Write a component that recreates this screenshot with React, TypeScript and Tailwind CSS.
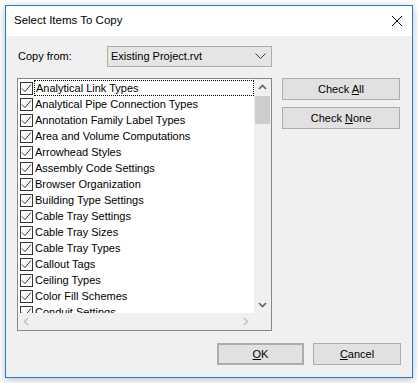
import React from 'react';

const ITEMS = [
  'Analytical Link Types',
  'Analytical Pipe Connection Types',
  'Annotation Family Label Types',
  'Area and Volume Computations',
  'Arrowhead Styles',
  'Assembly Code Settings',
  'Browser Organization',
  'Building Type Settings',
  'Cable Tray Settings',
  'Cable Tray Sizes',
  'Cable Tray Types',
  'Callout Tags',
  'Ceiling Types',
  'Color Fill Schemes',
  'Conduit Settings',
];

const CheckBox: React.FC = () => (
  <span className="w-[13px] h-[13px] border border-[#333333] bg-white shrink-0 flex items-center justify-center">
    <svg width="11" height="11" viewBox="0 0 11 11" fill="none">
      <path d="M1 5.5 L4 8.5 L10 1.5" stroke="#333333" strokeWidth="1" />
    </svg>
  </span>
);

const Chevron: React.FC<{ dir: 'up' | 'down' | 'left' | 'right'; color?: string }> = ({ dir, color = '#606060' }) => {
  const d = {
    up: 'M1 6 L4.5 2.5 L8 6',
    down: 'M1 3 L4.5 6.5 L8 3',
    left: 'M6 1 L2.5 4.5 L6 8',
    right: 'M3 1 L6.5 4.5 L3 8',
  }[dir];
  return (
    <svg width="9" height="9" viewBox="0 0 9 9" fill="none">
      <path d={d} stroke={color} strokeWidth="1.6" />
    </svg>
  );
};

const Btn: React.FC<{ children: React.ReactNode; className?: string }> = ({ children, className = '' }) => (
  <div className={`h-[22px] flex items-center justify-center bg-[#e1e1e1] border border-[#adadad] text-[11px] text-black ${className}`}>
    <span className="whitespace-pre">{children}</span>
  </div>
);

const App: React.FC = () => {
  return (
    <div className="w-[418px] h-[383px] bg-white overflow-hidden [font-family:'Liberation_Sans',Arial,sans-serif]">
      <div className="ml-[5px] mt-[5px] w-[408px] h-[373px] border border-[#1a7fd4] bg-[#f0f0f0] flex flex-col shadow-[0_2px_8px_rgba(0,0,0,0.25)]">
        {/* Title bar */}
        <div className="h-[30px] bg-white flex items-center justify-between pl-[8px] pr-[10px]">
          <span className="text-[11.5px] text-black">Select Items To Copy</span>
          <svg width="10" height="10" viewBox="0 0 10 10">
            <path d="M0 0 L10 10 M10 0 L0 10" stroke="#000" strokeWidth="1" />
          </svg>
        </div>

        {/* Body */}
        <div className="flex flex-col pl-[11px] pr-[11px]">
          <div className="flex items-center mt-[10px] h-[21px]">
            <span className="w-[90px] pl-[1px] text-[11px] text-black">Copy from:</span>
            <div className="w-[165px] h-[21px] bg-[#e5e5e5] border border-[#adadad] flex items-center justify-between pl-[3px] pr-[5px]">
              <span className="text-[11px] text-black">Existing Project.rvt</span>
              <svg width="11" height="7" viewBox="0 0 11 7" fill="none">
                <path d="M0.5 0.5 L5.5 5.5 L10.5 0.5" stroke="#404040" strokeWidth="1" />
              </svg>
            </div>
          </div>

          <div className="flex mt-[11px]">
            {/* List */}
            <div className="w-[255px] h-[253px] border border-[#828790] bg-white flex flex-col">
              <div className="flex flex-1 min-h-0">
                <div className="flex-1 overflow-hidden pt-[1px]">
                  {ITEMS.map((item, i) => (
                    <div key={item} className="h-[16px] flex items-center pl-[2px]">
                      <CheckBox />
                      <span
                        className={`ml-[1px] h-[16px] flex-1 flex items-center pl-[1px] text-[11px] text-black whitespace-nowrap ${
                          i === 0 ? 'border border-dotted border-black' : ''
                        }`}
                      >
                        {item}
                      </span>
                    </div>
                  ))}
                </div>
                {/* Vertical scrollbar */}
                <div className="w-[17px] bg-[#f0f0f0] flex flex-col">
                  <div className="h-[17px] flex items-center justify-center">
                    <Chevron dir="up" />
                  </div>
                  <div className="flex-1 px-[1px]">
                    <div className="h-[28px] bg-[#cdcdcd]" />
                  </div>
                  <div className="h-[17px] flex items-center justify-center">
                    <Chevron dir="down" />
                  </div>
                </div>
              </div>
              {/* Horizontal scrollbar */}
              <div className="h-[17px] flex bg-[#f0f0f0]">
                <div className="flex-1 flex items-center justify-between px-[4px]">
                  <Chevron dir="left" color="#c4c4c4" />
                  <Chevron dir="right" color="#c4c4c4" />
                </div>
                <div className="w-[17px]" />
              </div>
            </div>

            {/* Side buttons */}
            <div className="ml-[10px] flex flex-col gap-[7px]">
              <Btn className="w-[118px]">
                Check <span className="underline">A</span>ll
              </Btn>
              <Btn className="w-[118px]">
                Check <span className="underline">N</span>one
              </Btn>
            </div>
          </div>

          {/* Footer buttons */}
          <div className="flex justify-end gap-[9px] mt-[12px]">
            <Btn className="w-[87px] border-2 border-[#0078d7]">
              <span className="underline">O</span>K
            </Btn>
            <Btn className="w-[88px]">
              <span className="underline">C</span>ancel
            </Btn>
          </div>
        </div>
      </div>
    </div>
  );
};

export default App;
